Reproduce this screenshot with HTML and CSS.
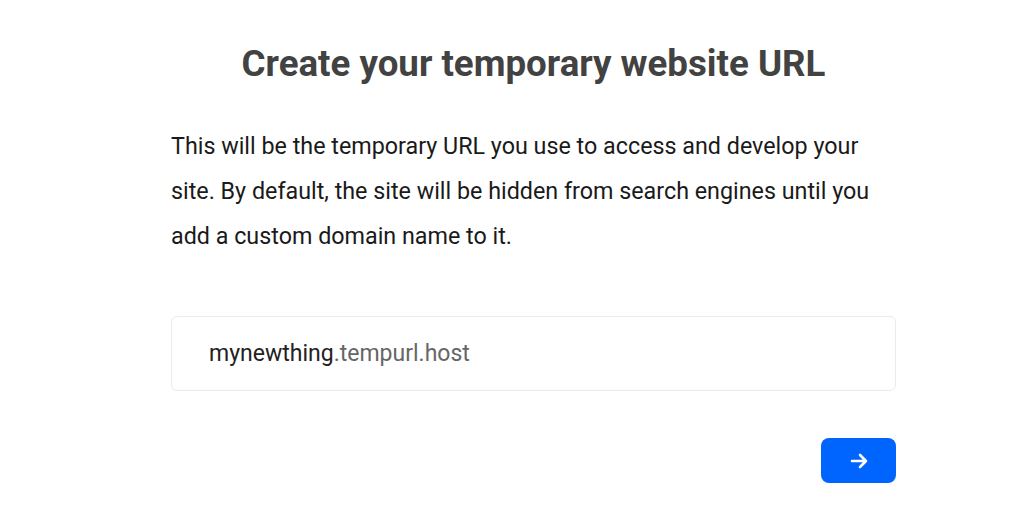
FILE: index.html
```html
<!DOCTYPE html>
<html lang="en">
<head>
<meta charset="utf-8">
<title>Create your temporary website URL</title>
<link rel="stylesheet" href="styles.css">
</head>
<body>
<main class="panel">
  <h1 class="title">Create your temporary website URL</h1>
  <p class="desc">This will be the temporary URL you use to access and develop your site. By default, the site will be hidden from search engines until you add a custom domain name to it.</p>
  <div class="url-field">
    <span class="sub">mynewthing</span><span class="domain">.tempurl.host</span>
  </div>
  <div class="actions">
    <button class="next" type="button" aria-label="Next">
      <svg width="18" height="16" viewBox="0 0 18 16" fill="none" stroke="#fff" stroke-width="2.6" stroke-linecap="round" stroke-linejoin="round"><path d="M2 8h14M10 2l6 6-6 6"/></svg>
    </button>
  </div>
</main>
</body>
</html>
```
FILE: styles.css
```css
html, body {
  margin: 0;
  padding: 0;
  background: #fff;
}
body {
  font-family: Roboto, "Liberation Sans", Arial, sans-serif;
  color: #1a1a1a;
}
.panel {
  width: 725px;
  margin-left: 171px;
  padding-top: 38px;
}
.title {
  margin: 0;
  text-align: center;
  font-size: 36.7px;
  font-weight: 700;
  line-height: 52px;
  color: #424242;
}
.desc {
  margin: 34px 0 0;
  font-size: 23.3px;
  line-height: 45px;
  color: #1a1a1a;
}
.url-field {
  margin-top: 57px;
  height: 73px;
  border: 1px solid #ebebeb;
  border-radius: 6px;
  display: flex;
  align-items: center;
  padding-left: 37px;
  font-size: 23px;
}
.sub { color: #222; }
.domain { color: #666; }
.actions {
  display: flex;
  justify-content: flex-end;
  margin-top: 47px;
}
.next {
  width: 75px;
  height: 45px;
  border: none;
  border-radius: 8px;
  background: #0064ff;
  display: flex;
  align-items: center;
  justify-content: center;
  padding: 0;
  cursor: pointer;
}
```
